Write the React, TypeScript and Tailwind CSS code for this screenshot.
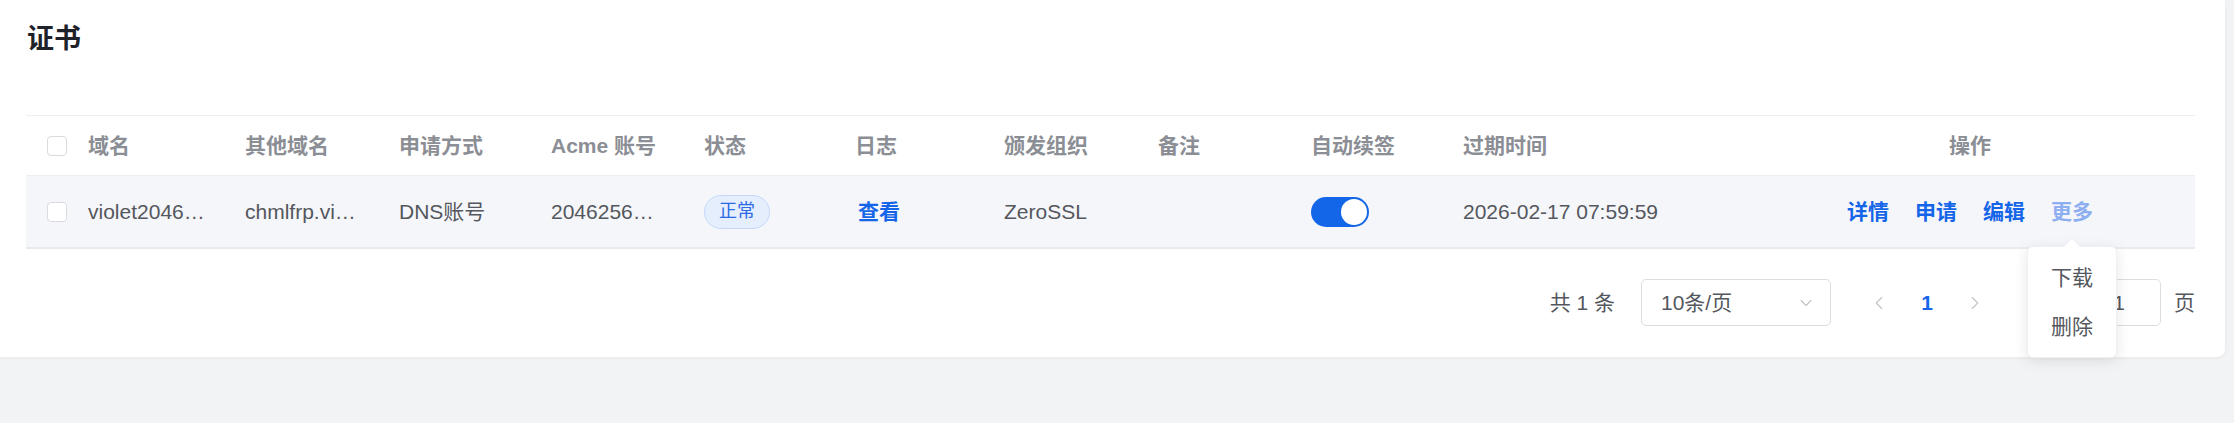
import { ChevronDown, ChevronLeft, ChevronRight } from "lucide-react";

const columns = [
  "域名",
  "其他域名",
  "申请方式",
  "Acme 账号",
  "状态",
  "日志",
  "颁发组织",
  "备注",
  "自动续签",
  "过期时间"
];

const gridCols =
  "grid grid-cols-[46px_157px_154px_152px_153px_151px_149px_154px_153px_152px_298px_450px] items-center";

function Checkbox() {
  return (
    <span className="block h-[20px] w-[20px] rounded-[4px] border border-[#d9dbe1] bg-white" />
  );
}

function Switch() {
  return (
    <span className="flex h-[30px] w-[58px] items-center justify-end rounded-full bg-[#1366e8] px-[2px]">
      <span className="block h-[26px] w-[26px] rounded-full bg-white" />
    </span>
  );
}

function MoreMenu() {
  return (
    <span className="relative">
      <span className="text-[#8daef0]">更多</span>
      <div className="absolute left-1/2 top-[calc(100%+11px)] z-10 w-[90px] -translate-x-1/2">
        <div className="relative mt-[8px] rounded-[6px] border border-[#eef0f3] bg-white py-[6px] font-normal text-[#54575d] shadow-[0_3px_14px_rgba(0,0,0,0.1)]">
          <span className="absolute -top-[7px] left-1/2 h-[12px] w-[12px] -translate-x-1/2 rotate-45 border-l border-t border-[#eef0f3] bg-white" />
          <div className="flex h-[49px] items-center justify-center">下载</div>
          <div className="flex h-[49px] items-center justify-center">删除</div>
        </div>
      </div>
    </span>
  );
}

export default function App() {
  return (
    <div className="h-[423px] w-[2234px] overflow-hidden bg-[#f2f3f5] font-['Liberation_Sans','Noto_Sans_CJK_SC',sans-serif]">
      <div className="w-[2225px] rounded-br-lg bg-white pb-[31px] pl-[26px] pr-[30px] pt-[19px] shadow-[0_1px_4px_rgba(0,0,0,0.05)]">
        <h1 className="pl-px text-[27px] font-bold leading-[40px] text-[#1f2329]">
          证书
        </h1>

        <div className="mt-[56px]">
          <div
            className={`${gridCols} h-[60px] border-t border-[#eceef1] text-[21px] font-bold text-[#8b8e94]`}
          >
            <div className="pl-[21px]">
              <Checkbox />
            </div>
            {columns.map((c) => (
              <div key={c} className="whitespace-nowrap px-4">
                {c}
              </div>
            ))}
            <div className="text-center">操作</div>
          </div>

          <div
            className={`${gridCols} h-[74px] border-b-2 border-t border-b-[#e8eaef] border-t-[#eceef2] bg-[#f4f6fa] text-[21px] text-[#54575d]`}
          >
            <div className="pl-[21px]">
              <Checkbox />
            </div>
            <div className="truncate px-4">violet2046…</div>
            <div className="truncate px-4">chmlfrp.vi…</div>
            <div className="truncate px-4">DNS账号</div>
            <div className="truncate px-4">2046256…</div>
            <div className="px-4">
              <span className="inline-flex h-[34px] items-center rounded-full border border-[#c6d8fa] bg-[#e5eefd] px-[14px] text-[18px] text-[#2b6ae6]">
                正常
              </span>
            </div>
            <div className="pl-[19px] pr-4 font-bold text-[#1565e9]">查看</div>
            <div className="px-4">ZeroSSL</div>
            <div className="px-4" />
            <div className="px-4">
              <Switch />
            </div>
            <div className="whitespace-nowrap px-4">2026-02-17 07:59:59</div>
            <div className="flex justify-center gap-[26px] font-bold text-[#1565e9]">
              <span>详情</span>
              <span>申请</span>
              <span>编辑</span>
              <MoreMenu />
            </div>
          </div>

          <div className="mt-[30px] flex h-[47px] items-center justify-end text-[21px] text-[#54575d]">
            <span className="whitespace-nowrap">共 1 条</span>
            <div className="ml-[26px] flex h-[47px] w-[190px] items-center justify-between rounded-[5px] border border-[#dcdee3] pl-[19px] pr-[14px]">
              <span>10条/页</span>
              <ChevronDown size={20} strokeWidth={1.25} className="text-[#a9acb1]" />
            </div>
            <div className="ml-[27px] flex items-center gap-[6px]">
              <span className="flex h-[42px] w-[42px] items-center justify-center text-[#c2c4c8]">
                <ChevronLeft size={22} strokeWidth={1.25} />
              </span>
              <span className="flex h-[42px] w-[42px] items-center justify-center font-bold text-[#1565e9]">
                1
              </span>
              <span className="flex h-[42px] w-[42px] items-center justify-center text-[#c2c4c8]">
                <ChevronRight size={22} strokeWidth={1.25} />
              </span>
            </div>
            <span className="ml-[33px] whitespace-nowrap">跳至</span>
            <div className="ml-[6px] flex h-[47px] w-[84px] items-center justify-center rounded-[5px] border border-[#dcdee3]">
              1
            </div>
            <span className="ml-[13px]">页</span>
          </div>
        </div>
      </div>
    </div>
  );
}
